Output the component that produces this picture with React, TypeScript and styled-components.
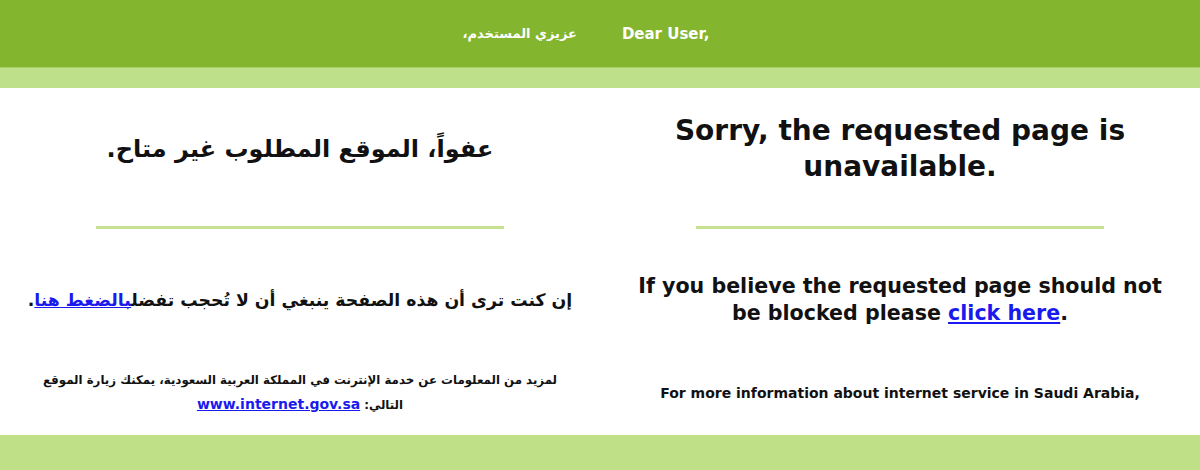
import styled, { createGlobalStyle } from "styled-components";

const GlobalStyle = createGlobalStyle`
  html, body {
    margin: 0;
    padding: 0;
    background: #ffffff;
  }
  body {
    font-family: "DejaVu Sans", Verdana, sans-serif;
    color: #111111;
  }
`;

const Page = styled.div`
  width: 1200px;
  height: 470px;
  display: flex;
  flex-direction: column;
  overflow: hidden;
`;

const TopBar = styled.header`
  flex-shrink: 0;
  height: 67px;
  background: #83b52f;
  display: flex;
  align-items: center;
  justify-content: center;
  gap: 45px;
  padding-right: 28px;
  box-sizing: border-box;
`;

const Greeting = styled.span<{ $rtl?: boolean }>`
  color: #ffffff;
  font-size: ${(p) => (p.$rtl ? "13px" : "15px")};
  font-weight: bold;
  direction: ${(p) => (p.$rtl ? "rtl" : "ltr")};
`;

const Strip = styled.div`
  flex-shrink: 0;
  height: 21px;
  background: #bfe08a;
  border-top: 1px solid #a9cf6c;
  box-sizing: border-box;
`;

const Body = styled.main`
  flex: 1;
  display: grid;
  grid-template-columns: 600px 600px;
  row-gap: 41px;
  align-items: center;
  justify-items: center;
  align-content: start;
  padding: 25px 0 0;
`;

const Heading = styled.h1<{ $rtl?: boolean }>`
  margin: 0;
  font-size: ${(p) => (p.$rtl ? "24px" : "28px")};
  line-height: 36px;
  font-weight: bold;
  text-align: center;
  direction: ${(p) => (p.$rtl ? "rtl" : "ltr")};
  width: 520px;
`;

const Divider = styled.hr`
  width: 408px;
  height: 3px;
  margin: 0 0 3px;
  border: 0;
  background: #c6e190;
`;

const Para = styled.p<{ $rtl?: boolean }>`
  margin: 0;
  font-size: ${(p) => (p.$rtl ? "17.3px" : "20.6px")};
  line-height: 27px;
  font-weight: bold;
  text-align: center;
  direction: ${(p) => (p.$rtl ? "rtl" : "ltr")};
  width: ${(p) => (p.$rtl ? "590px" : "540px")};
`;

const Note = styled.p<{ $rtl?: boolean }>`
  margin: 0;
  font-size: ${(p) => (p.$rtl ? "11.8px" : "14px")};
  line-height: 24px;
  font-weight: bold;
  text-align: center;
  direction: ${(p) => (p.$rtl ? "rtl" : "ltr")};
  width: 590px;
`;

const Link = styled.a<{ $size?: string }>`
  color: #1a1aee;
  text-decoration: underline;
  font-size: ${(p) => p.$size ?? "inherit"};
`;

const BottomBand = styled.footer`
  flex-shrink: 0;
  height: 35px;
  background: #bfe087;
`;

export default function App() {
  return (
    <Page>
      <GlobalStyle />
      <TopBar>
        <Greeting $rtl>عزيزي المستخدم،</Greeting>
        <Greeting>Dear User,</Greeting>
      </TopBar>
      <Strip />
      <Body>
        <Heading $rtl>عفواً، الموقع المطلوب غير متاح.</Heading>
        <Heading>
          Sorry, the requested page is
          <br />
          unavailable.
        </Heading>

        <Divider />
        <Divider />

        <Para $rtl>
          إن كنت ترى أن هذه الصفحة ينبغي أن لا تُحجب تفضل
          <Link href="#">بالضغط هنا</Link>.
        </Para>
        <Para>
          If you believe the requested page should not be blocked please{" "}
          <Link href="#">click here</Link>.
        </Para>

        <Note $rtl>
          لمزيد من المعلومات عن خدمة الإنترنت في المملكة العربية السعودية، يمكنك زيارة الموقع
          <br />
          التالي: <Link href="#" $size="14px">www.internet.gov.sa</Link>
        </Note>
        <Note>For more information about internet service in Saudi Arabia,</Note>
      </Body>
      <BottomBand />
    </Page>
  );
}
